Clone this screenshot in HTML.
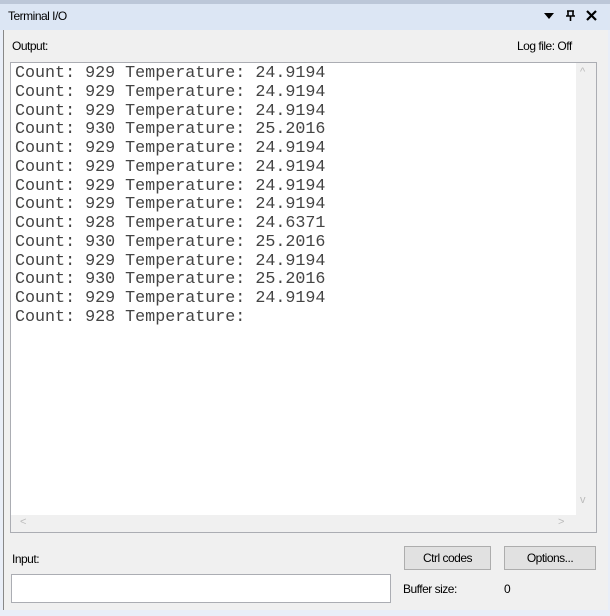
<!DOCTYPE html><html><head><style>
body{margin:0;width:610px;height:616px;background:#e9eef8;position:relative;overflow:hidden;font-family:"Liberation Sans",sans-serif;font-size:12px;color:#000}
.a{position:absolute}
.t{letter-spacing:-0.5px}
pre{margin:0;font-family:"Liberation Mono",monospace;font-size:16.7px;line-height:18.77px;color:#444}
.btn{background:#e1e1e1;border:1px solid #adadad;text-align:center;line-height:22px;box-sizing:border-box}
</style></head><body>
<div class="a" style="left:0;top:0;width:610px;height:4px;background:#bcc7d8"></div>
<div class="a" style="left:0;top:4px;width:610px;height:26px;background:#dce6f4"></div>
<div class="a t" style="left:8px;top:9px">Terminal I/O</div>
<svg class="a" style="left:540px;top:8px" width="66" height="14" viewBox="0 0 66 14">
<path d="M4 5 L14 5 L9 11 Z" fill="#000"/>
<path d="M28 3 L28 8 M33 3 L33 8 M26 8 L35 8 M27 3 L34 3 M30.5 8 L30.5 13" stroke="#000" stroke-width="1.6" fill="none"/>
<path d="M47 3 L56 12 M56 3 L47 12" stroke="#000" stroke-width="2.2"/>
</svg>
<div class="a" style="left:3px;top:30px;width:604px;height:580px;background:#f0f0f0;border-left:1px solid #888"></div>
<div class="a t" style="left:12px;top:39px">Output:</div>
<div class="a t" style="left:517px;top:39px">Log file: Off</div>
<div class="a" style="left:10px;top:62px;width:587px;height:471px;background:#fff;border:1px solid #abadb3;box-sizing:border-box"></div>
<div class="a" style="left:576px;top:63px;width:20px;height:452px;background:#f0f0f0"></div>
<div class="a" style="left:11px;top:515px;width:585px;height:17px;background:#f0f0f0"></div>
<div class="a" style="left:580px;top:66px;color:#bbb;font-size:11px">^</div>
<div class="a" style="left:580px;top:494px;color:#bbb;font-size:11px">v</div>
<div class="a" style="left:20px;top:516px;color:#bbb;font-size:11px">&lt;</div>
<div class="a" style="left:558px;top:516px;color:#bbb;font-size:11px">&gt;</div>
<pre class="a" style="left:15px;top:65px">Count: 929 Temperature: 24.9194
Count: 929 Temperature: 24.9194
Count: 929 Temperature: 24.9194
Count: 930 Temperature: 25.2016
Count: 929 Temperature: 24.9194
Count: 929 Temperature: 24.9194
Count: 929 Temperature: 24.9194
Count: 929 Temperature: 24.9194
Count: 928 Temperature: 24.6371
Count: 930 Temperature: 25.2016
Count: 929 Temperature: 24.9194
Count: 930 Temperature: 25.2016
Count: 929 Temperature: 24.9194
Count: 928 Temperature:</pre>
<div class="a t" style="left:12px;top:552px">Input:</div>
<div class="a btn t" style="left:404px;top:546px;width:87px;height:24px">Ctrl codes</div>
<div class="a btn t" style="left:504px;top:546px;width:92px;height:24px">Options...</div>
<div class="a" style="left:11px;top:574px;width:380px;height:29px;background:#fff;border:1px solid #abadb3;box-sizing:border-box"></div>
<div class="a t" style="left:403px;top:582px">Buffer size:</div>
<div class="a" style="left:504px;top:582px">0</div>
</body></html>
